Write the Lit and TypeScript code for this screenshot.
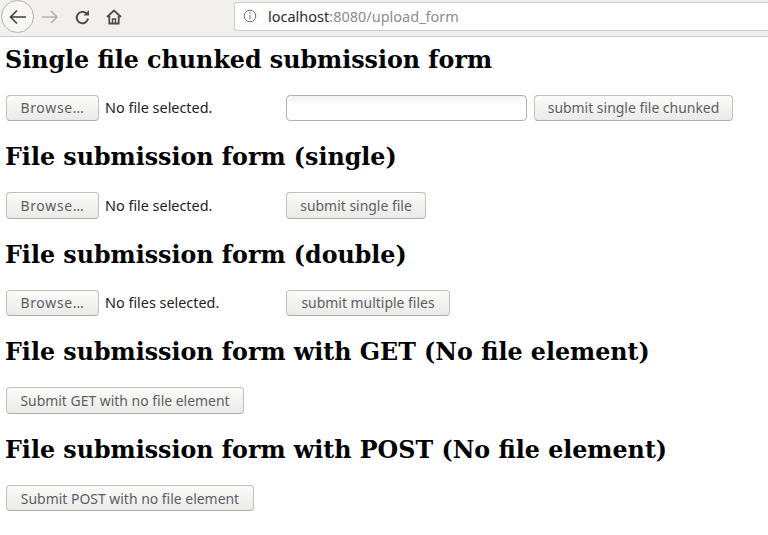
import { LitElement, html, css } from "lit";
import { customElement } from "lit/decorators.js";

@customElement("app-root")
export class AppRoot extends LitElement {
  static styles = css`
    :host { display: block; width: 768px; height: 535px; overflow: hidden; background: #fff; font-family: "Noto Sans", sans-serif; }
    .toolbar { height: 36px; background: #f1f0ee; border-bottom: 1px solid #cfcdca; display: flex; align-items: center; overflow: hidden; }
    .back { width: 33px; height: 33px; margin: -3px 0 0 1px; border: 1px solid #b4b2af; border-radius: 50%; background: #f8f7f6; display: flex; align-items: center; justify-content: center; box-sizing: border-box; flex: none; }
    .nav { display: flex; align-items: center; margin-left: 7px; gap: 15px; margin-top: -2px; }
    .url { margin-left: auto; margin-top: -4px; width: 534px; height: 29px; box-sizing: border-box; background: #fff; border: 1px solid #d0cecb; border-right: none; border-radius: 3px 0 0 3px; display: flex; align-items: center; padding-left: 8px; gap: 11px; font-size: 14.5px; flex: none; }
    .host { color: #2b2b2b; }
    .rest { color: #8e8e8e; }
    main { padding: 0 5px; }
    h1 { margin: 0; font: bold 23.75px "DejaVu Serif", serif; color: #000; height: 30px; line-height: 30px; white-space: nowrap; }
    section { height: 97.6px; padding-top: 7.5px; box-sizing: border-box; }
    .row { display: flex; align-items: center; margin-top: 20px; margin-left: 1px; height: 26.5px; }
    .file { width: 280px; display: flex; align-items: center; flex: none; font-size: 14.4px; color: #222; }
    .label { margin-left: 6px; white-space: nowrap; }
    button { height: 26.5px; box-sizing: border-box; border: 1px solid #c2c0bd; border-bottom-color: #b0aeab; border-radius: 4px; background: linear-gradient(#fbfbfa, #ebeae8); color: #5c5f63; font: 13.95px "Noto Sans", sans-serif; padding: 0; display: flex; align-items: center; justify-content: center; flex: none; white-space: nowrap; }
    .browse { width: 93px; letter-spacing: 0.7px; }
    .text { width: 241px; height: 26.5px; box-sizing: border-box; border: 1px solid #b4b2af; border-radius: 4px; background: linear-gradient(#f4f3f2, #fff 40%); margin-right: 7px; flex: none; }
  `;

  private section(title: string, fileLabel: string | null, btn: string, w: number, text = false) {
    return html`<section>
      <h1>${title}</h1>
      <div class="row">
        ${fileLabel ? html`<div class="file"><button class="browse">Browse…</button><span class="label">${fileLabel}</span></div>` : ""}
        ${text ? html`<div class="text"></div>` : ""}
        <button style="width:${w}px">${btn}</button>
      </div>
    </section>`;
  }

  render() {
    return html`
      <div class="toolbar">
        <div class="back">
          <svg width="18" height="18" viewBox="0 0 18 18" fill="none" stroke="#3f3f3f" stroke-width="1.6"><path d="M17 9H1.5M8 2.5L1.5 9 8 15.5"/></svg>
        </div>
        <div class="nav">
          <svg width="18" height="18" viewBox="0 0 18 18" fill="none" stroke="#b5b4b2" stroke-width="1.6"><path d="M1 9h15M10 3l6 6-6 6"/></svg>
          <svg width="17" height="17" viewBox="0 0 17 17" fill="none" stroke="#4d4d4d" stroke-width="2"><path d="M14 9.5a5.7 5.7 0 1 1-1.6-5"/><path d="M15 1v5.5H9.5" fill="#4d4d4d" stroke="none"/></svg>
          <svg width="16" height="16" viewBox="0 0 16 16" fill="none" stroke="#4d4d4d" stroke-width="1.8"><path d="M1 8l7-6.5L15 8M3.3 7v7.5h9.4V7"/><path d="M6.5 14.5V10h3v4.5" stroke-width="1.4"/></svg>
        </div>
        <div class="url">
          <svg width="14" height="14" viewBox="0 0 14 14" fill="none" stroke="#6f6f6f"><circle cx="7" cy="7" r="5.8"/><path d="M7 6v4.3M7 3.4v1.5"/></svg>
          <span><span class="host">localhost</span><span class="rest">:8080/upload_form</span></span>
        </div>
      </div>
      <main>
        ${this.section("Single file chunked submission form", "No file selected.", "submit single file chunked", 199, true)}
        ${this.section("File submission form (single)", "No file selected.", "submit single file", 140)}
        ${this.section("File submission form (double)", "No files selected.", "submit multiple files", 164)}
        ${this.section("File submission form with GET (No file element)", null, "Submit GET with no file element", 238)}
        ${this.section("File submission form with POST (No file element)", null, "Submit POST with no file element", 248)}
      </main>
    `;
  }
}
